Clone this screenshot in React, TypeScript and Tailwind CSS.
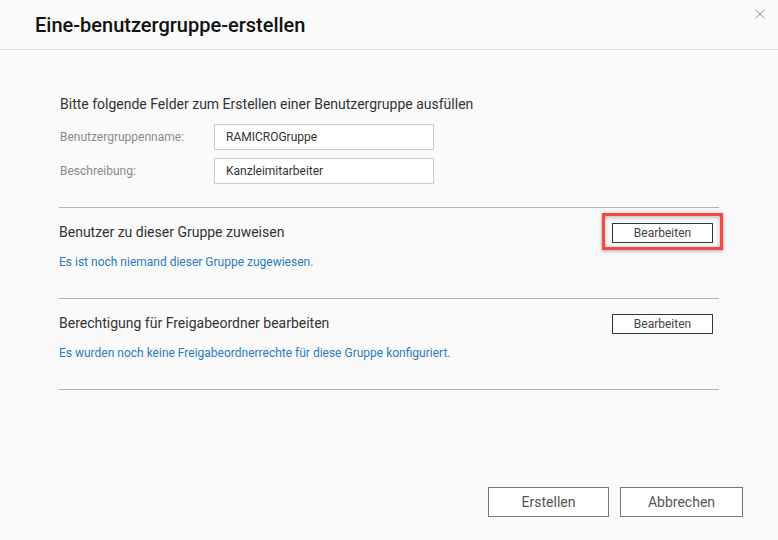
import React from "react";

function EditButton({ highlighted }: { highlighted?: boolean }) {
  return (
    <div className="relative">
      <button className="w-[101px] h-[20px] bg-white border border-[#333333] text-[12px] leading-none text-[#444444]">
        Bearbeiten
      </button>
      {highlighted && (
        <div className="absolute -left-[10px] -right-[10px] -top-[7px] -bottom-[6px] border-[3px] border-[#f44848] shadow-[0_1px_4px_rgba(0,0,0,0.35),inset_0_1px_4px_rgba(0,0,0,0.3)] pointer-events-none" />
      )}
    </div>
  );
}

function Section({
  title,
  info,
  highlighted,
}: {
  title: string;
  info: string;
  highlighted?: boolean;
}) {
  return (
    <div className="border-t border-[#b4b4b4] pt-[14px] h-[91px]">
      <div className="flex items-center justify-between h-[20px] pr-[6px]">
        <div className="text-[14px] text-[#333333]">{title}</div>
        <EditButton highlighted={highlighted} />
      </div>
      <div className="mt-[12px] text-[12px] leading-[16px] text-[#2a7bc1]">{info}</div>
    </div>
  );
}

export default function App() {
  return (
    <div
      className="relative w-[778px] h-[540px] bg-[#fafafa] flex flex-col overflow-hidden"
      style={{ fontFamily: "Roboto, 'Liberation Sans', sans-serif" }}
    >
      <div className="h-[50px] border-b border-[#e2e2e2] flex items-center pl-[35px] shrink-0">
        <div className="text-[20px] font-medium text-[#111111] mt-[1px]">Eine-benutzergruppe-erstellen</div>
      </div>
      <button className="absolute right-[12px] top-[8px] w-[12px] h-[12px] text-[#9a9a9a]">
        <svg viewBox="0 0 12 12" width="12" height="12" fill="none" stroke="currentColor" strokeWidth="1">
          <path d="M1.5 1.5 L10.5 10.5 M10.5 1.5 L1.5 10.5" />
        </svg>
      </button>

      <div className="px-[59px] pt-[44px] flex-1">
        <div className="text-[14px] leading-[20px] text-[#333333] pl-[1px]">
          Bitte folgende Felder zum Erstellen einer Benutzergruppe ausfüllen
        </div>
        <div className="mt-[10px] flex flex-col gap-[8px] pl-[1px]">
          <div className="flex items-center">
            <div className="w-[154px] text-[12px] text-[#8a8a8a]">Benutzergruppenname:</div>
            <div className="w-[220px] h-[26px] bg-white border border-[#cccccc] flex items-center px-[11px] text-[12px] text-[#333333]">
              RAMICROGruppe
            </div>
          </div>
          <div className="flex items-center">
            <div className="w-[154px] text-[12px] text-[#8a8a8a]">Beschreibung:</div>
            <div className="w-[220px] h-[26px] bg-white border border-[#cccccc] flex items-center px-[11px] text-[12px] text-[#333333]">
              Kanzleimitarbeiter
            </div>
          </div>
        </div>
        <div className="mt-[23px]">
          <Section
            title="Benutzer zu dieser Gruppe zuweisen"
            info="Es ist noch niemand dieser Gruppe zugewiesen."
            highlighted
          />
          <Section
            title="Berechtigung für Freigabeordner bearbeiten"
            info="Es wurden noch keine Freigabeordnerrechte für diese Gruppe konfiguriert."
          />
          <div className="border-t border-[#b4b4b4]" />
        </div>
      </div>

      <div className="flex justify-end gap-[11px] pr-[35px] pb-[23px] shrink-0">
        <button className="w-[121px] h-[30px] bg-white border border-[#777777] text-[14px] text-[#555555]">
          Erstellen
        </button>
        <button className="w-[123px] h-[30px] bg-white border border-[#777777] text-[14px] text-[#555555]">
          Abbrechen
        </button>
      </div>
    </div>
  );
}
